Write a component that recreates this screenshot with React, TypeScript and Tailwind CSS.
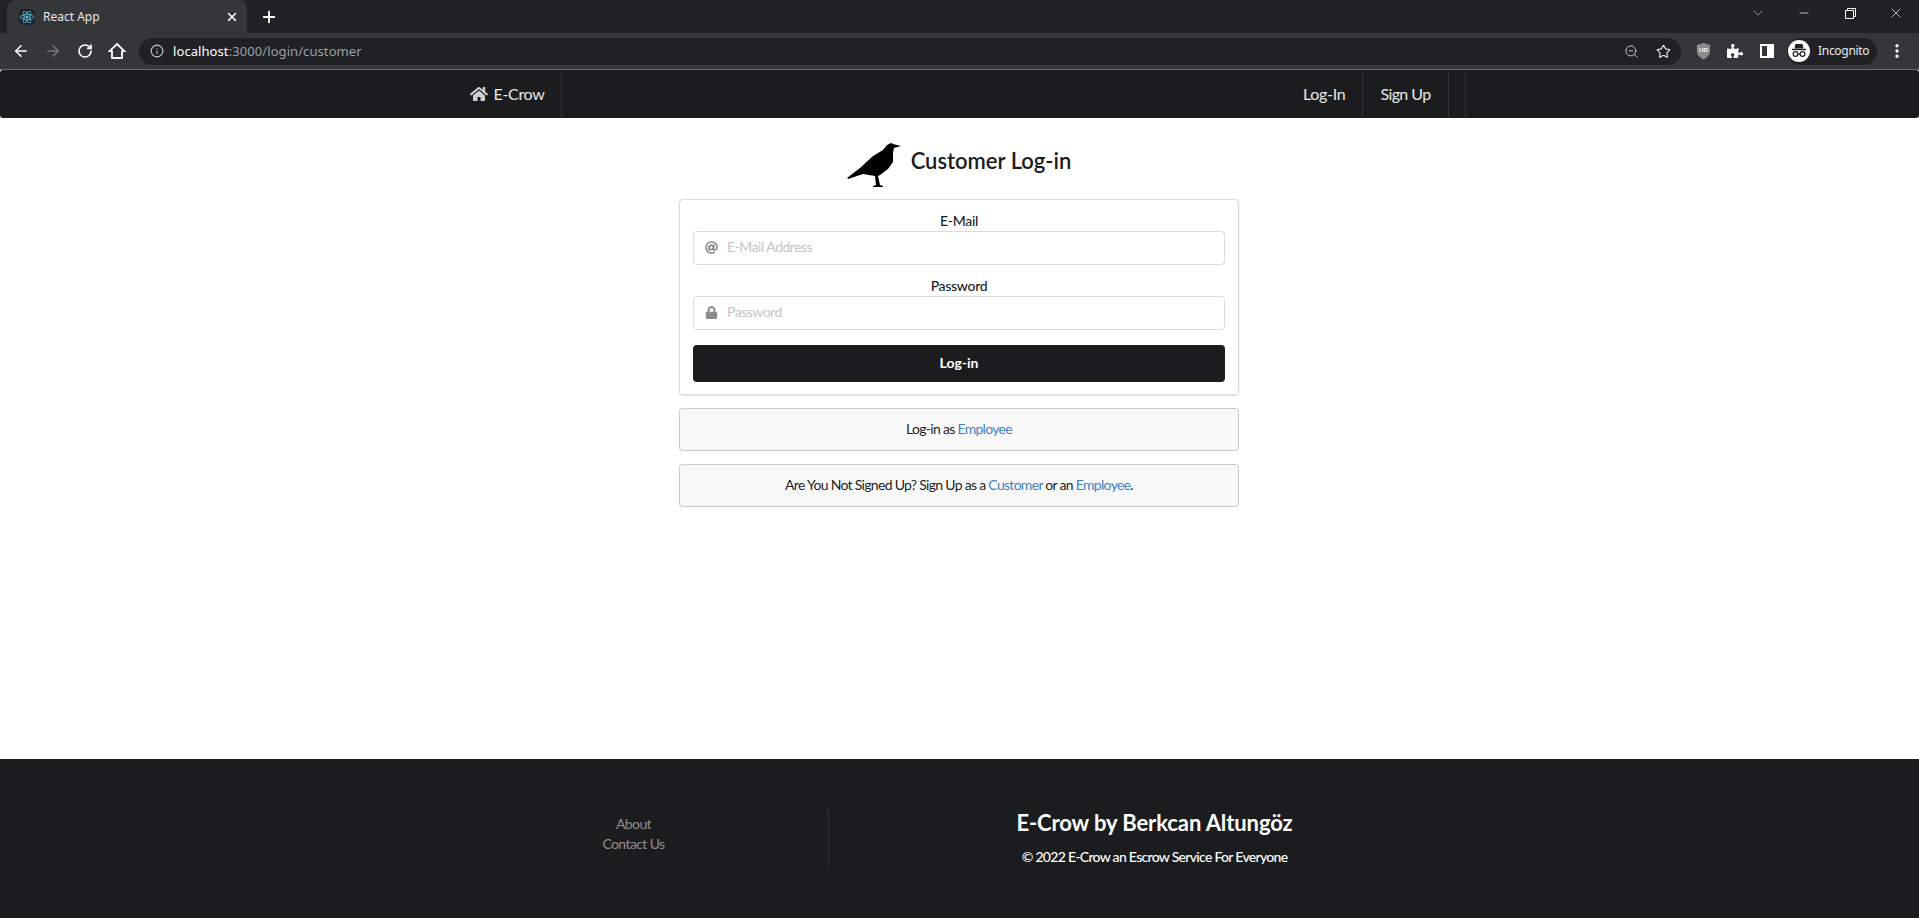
import { ArrowLeft, ArrowRight, ChevronDown, Info, Minus, MoreVertical, Plus, RotateCw, Star, X, ZoomOut } from "lucide-react";
import { FaAt, FaHome, FaLock, FaPuzzlePiece, FaReact } from "react-icons/fa";

const Crow = () => (
  <svg viewBox="0 0 54 44" className="h-[44px] w-[54px]" fill="#000">
    <path d="M0.3 34.7 L13 25 L26 13 L36 7 L40 2 L44 0 L47 1.3 L54 3 L47 5 L46 10 L46 19 L41 26 L33 32 L31 33 L33 42 L36 43 L36 44 L26 44 L26 43 L29 42 L28 33 L16 31 L1 36 Z" />
  </svg>
);

const Shield = () => (
  <svg viewBox="0 0 16 18" className="h-[17px] w-[15px]">
    <path d="M8 0 L15 2 V9 C15 13 11 16 8 17.5 C5 16 1 13 1 9 V2 Z" fill="#8a8b8d" />
    <text x="8" y="10" textAnchor="middle" fontSize="6.5" fontWeight="700" fill="#fff" fontFamily="Liberation Sans, sans-serif">
      UD
    </text>
  </svg>
);

const Incognito = () => (
  <div className="flex h-[22px] w-[22px] items-center justify-center rounded-full bg-white">
    <svg viewBox="0 0 22 22" className="h-[22px] w-[22px]" fill="none" stroke="#202124">
      <path d="M7.5 4 H14.5 L15.5 8.5 H6.5 Z" fill="#202124" stroke="none" />
      <path d="M4 9.5 H18" strokeWidth="1.4" />
      <circle cx="7.5" cy="14" r="2.4" strokeWidth="1.2" />
      <circle cx="14.5" cy="14" r="2.4" strokeWidth="1.2" />
      <path d="M9.9 14 H12.1" strokeWidth="1.2" />
    </svg>
  </div>
);

const HomeOutline = () => (
  <svg viewBox="0 0 18 18" className="h-[18px] w-[18px]" fill="none" stroke="#fff" strokeWidth="1.8">
    <path d="M9 2 L16.5 9.2 H14 V16 H4 V9.2 H1.5 Z" strokeLinejoin="miter" />
  </svg>
);

const BrowserChrome = () => (
  <div style={{ fontFamily: "'Noto Sans', sans-serif" }}>
    <div className="flex h-[33px] bg-[#202124]">
      <div className="ml-[7px] flex h-[33px] w-[240px] items-center rounded-t-lg bg-[#35363a] pl-[12px]">
        <div className="flex h-4 w-4 items-center justify-center rounded-sm bg-[#20232a]">
          <FaReact className="h-[14px] w-[14px] text-[#61dafb]" />
        </div>
        <span className="ml-2 flex-1 text-xs text-[#e8eaed]">React App</span>
        <X className="mr-[8px] h-[14px] w-[14px] text-white" strokeWidth={2.5} />
      </div>
      <div className="flex w-[44px] items-center justify-center">
        <Plus className="h-[18px] w-[18px] text-white" strokeWidth={2.5} />
      </div>
      <div className="flex-1" />
      <div className="flex w-[46px] items-center justify-center pb-[7px]">
        <ChevronDown className="h-[16px] w-[18px] text-[#c4c5c7]" strokeWidth={1} />
      </div>
      <div className="flex w-[46px] items-center justify-center pb-[7px]">
        <Minus className="h-[14px] w-[14px] text-white" strokeWidth={1.2} />
      </div>
      <div className="flex w-[46px] items-center justify-center pb-[7px]">
        <svg viewBox="0 0 11 11" className="h-[11px] w-[11px]" fill="none" stroke="#fff">
          <path d="M0.5 2.5 H8.5 V10.5 H0.5 Z M2.5 2.5 V0.5 H10.5 V8.5 H8.5" />
        </svg>
      </div>
      <div className="flex w-[46px] items-center justify-center pb-[7px]">
        <X className="h-[16px] w-[16px] text-white" strokeWidth={1} />
      </div>
    </div>
    <div className="flex h-[36px] items-center bg-[#35363a] pl-[5px]">
      <div className="flex w-8 justify-center">
        <ArrowLeft className="h-[18px] w-[18px] text-white" strokeWidth={2} />
      </div>
      <div className="flex w-8 justify-center">
        <ArrowRight className="h-[18px] w-[18px] text-[#77787b]" strokeWidth={2} />
      </div>
      <div className="flex w-8 justify-center">
        <RotateCw className="h-[16px] w-[16px] text-white" strokeWidth={2.4} />
      </div>
      <div className="flex w-8 justify-center">
        <HomeOutline />
      </div>
      <div className="ml-[6px] flex h-[27px] flex-1 items-center rounded-full bg-[#202124] pl-[11px] pr-[10px]">
        <Info className="h-[14px] w-[14px] text-[#c4c5c7]" strokeWidth={2} />
        <span className="ml-[9px] flex-1 pt-px text-[13px] tracking-[0.08px] text-[#9aa0a6]">
          <span className="text-white">localhost</span>:3000/login/customer
        </span>
        <ZoomOut className="h-[15px] w-[15px] text-[#c4c5c7]" strokeWidth={1.6} />
        <Star className="ml-[17px] h-[15px] w-[15px] text-[#e8eaed]" strokeWidth={1.8} />
      </div>
      <div className="ml-[6px] flex w-8 justify-center">
        <Shield />
      </div>
      <div className="flex w-8 justify-center">
        <FaPuzzlePiece className="h-[16px] w-[16px] text-white" />
      </div>
      <div className="flex w-8 justify-center">
        <div className="flex h-[14px] w-[14px] justify-end border-2 border-white">
          <div className="w-[5px] bg-white" />
        </div>
      </div>
      <div className="ml-[4px] flex h-[27px] w-[90px] items-center rounded-full bg-[#202124] pl-[1px]">
        <Incognito />
        <span className="ml-2 text-xs tracking-[-0.3px] text-[#e8eaed]">Incognito</span>
      </div>
      <div className="ml-[4px] mr-[6px] flex w-8 justify-center">
        <MoreVertical className="h-[18px] w-[18px] text-white" strokeWidth={2.4} />
      </div>
    </div>
    <div className="h-px bg-[#6a6b6e]" />
  </div>
);

const NavBar = () => (
  <nav className="h-[48px] rounded-[3px] bg-[#1b1c1d] text-base tracking-[-0.3px] text-white/90">
    <div className="mx-auto flex h-full w-[1012px] justify-between">
      <div className="flex items-center border-r border-white/10 px-4 pb-px">
        <FaHome className="mr-[6px] h-[18px] w-[18px] text-[#cfcfcf]" />
        E-Crow
      </div>
      <div className="flex">
        <div className="flex items-center border-r border-white/10 px-[17px] pb-px">Log-In</div>
        <div className="flex items-center border-r border-white/10 px-[17px] pb-px tracking-[-0.6px]">Sign Up</div>
        <div className="w-[17px] border-r border-white/10" />
      </div>
    </div>
  </nav>
);

const Field = ({ label, placeholder, type, icon }: { label: string; placeholder: string; type: string; icon: React.ReactNode }) => (
  <div>
    <div className="mb-px h-[18px] text-center text-sm font-medium leading-[18px] tracking-[-0.3px] text-black/90">{label}</div>
    <div className="flex h-[34px] items-center rounded-[4px] border border-[#dcdcdd] pb-[2px] pl-[11px]">
      <div className="flex w-[22px] text-[#8c8c8c]">{icon}</div>
      <input
        type={type}
        placeholder={placeholder}
        className="flex-1 text-sm tracking-[-0.5px] outline-none placeholder:text-[#c4c4c4]"
      />
    </div>
  </div>
);

const LoginCard = () => (
  <div className="flex h-[196px] flex-col rounded-[4px] border border-[#dddddd] bg-white px-[13px] pt-3 shadow-[0_1px_2px_rgba(34,36,38,0.15)]">
    <Field label="E-Mail" placeholder="E-Mail Address" type="email" icon={<FaAt className="h-[13px] w-[13px]" />} />
    <div className="mt-3">
      <Field label="Password" placeholder="Password" type="password" icon={<FaLock className="h-[13px] w-[13px]" />} />
    </div>
    <button className="mt-[15px] h-[37px] rounded-[4px] bg-[#1b1c1d] pb-px text-sm font-bold text-white">Log-in</button>
  </div>
);

const Message = ({ children }: { children: React.ReactNode }) => (
  <div className="mt-[13px] flex h-[43px] items-center justify-center rounded-[4px] bg-[#f8f8f9] pb-[2px] text-sm tracking-[-0.7px] text-black/90 shadow-[inset_0_0_0_1px_rgba(34,36,38,0.22)]">
    <div>{children}</div>
  </div>
);

const Footer = () => (
  <footer className="h-[159px] bg-[#1b1c1d] pt-[50px]">
    <div className="mx-auto flex w-[1041px]">
      <div className="h-[58px] w-[390px] border-r border-white/10 pt-[5px] text-center text-sm leading-5 tracking-[-0.6px] text-white/50">
        <div>About</div>
        <div>Contact Us</div>
      </div>
      <div className="flex-1 text-center text-white">
        <div className="text-[22px] font-bold leading-7 tracking-[-0.1px]">E-Crow by Berkcan Altungöz</div>
        <div className="mt-[10px] text-sm font-medium leading-5 tracking-[-0.7px]">© 2022 E-Crow an Escrow Service For Everyone</div>
      </div>
    </div>
  </footer>
);

export default function App() {
  return (
    <div className="flex h-[919px] flex-col bg-white" style={{ fontFamily: "Lato, sans-serif" }}>
      <BrowserChrome />
      <NavBar />
      <main className="flex-1 pr-px pt-[25px]">
        <div className="mx-auto w-[560px]">
          <div className="mb-3 flex items-center justify-center gap-[10px]">
            <Crow />
            <h2 className="pb-[10px] text-[22px] font-semibold text-[#1b1c1d]">Customer Log-in</h2>
          </div>
          <LoginCard />
          <Message>
            Log-in as <a className="text-[#4183c4]">Employee</a>
          </Message>
          <Message>
            Are You Not Signed Up? Sign Up as a <a className="text-[#4183c4]">Customer</a> or an{" "}
            <a className="text-[#4183c4]">Employee</a>.
          </Message>
        </div>
      </main>
      <Footer />
      <div className="h-px bg-white" />
    </div>
  );
}
